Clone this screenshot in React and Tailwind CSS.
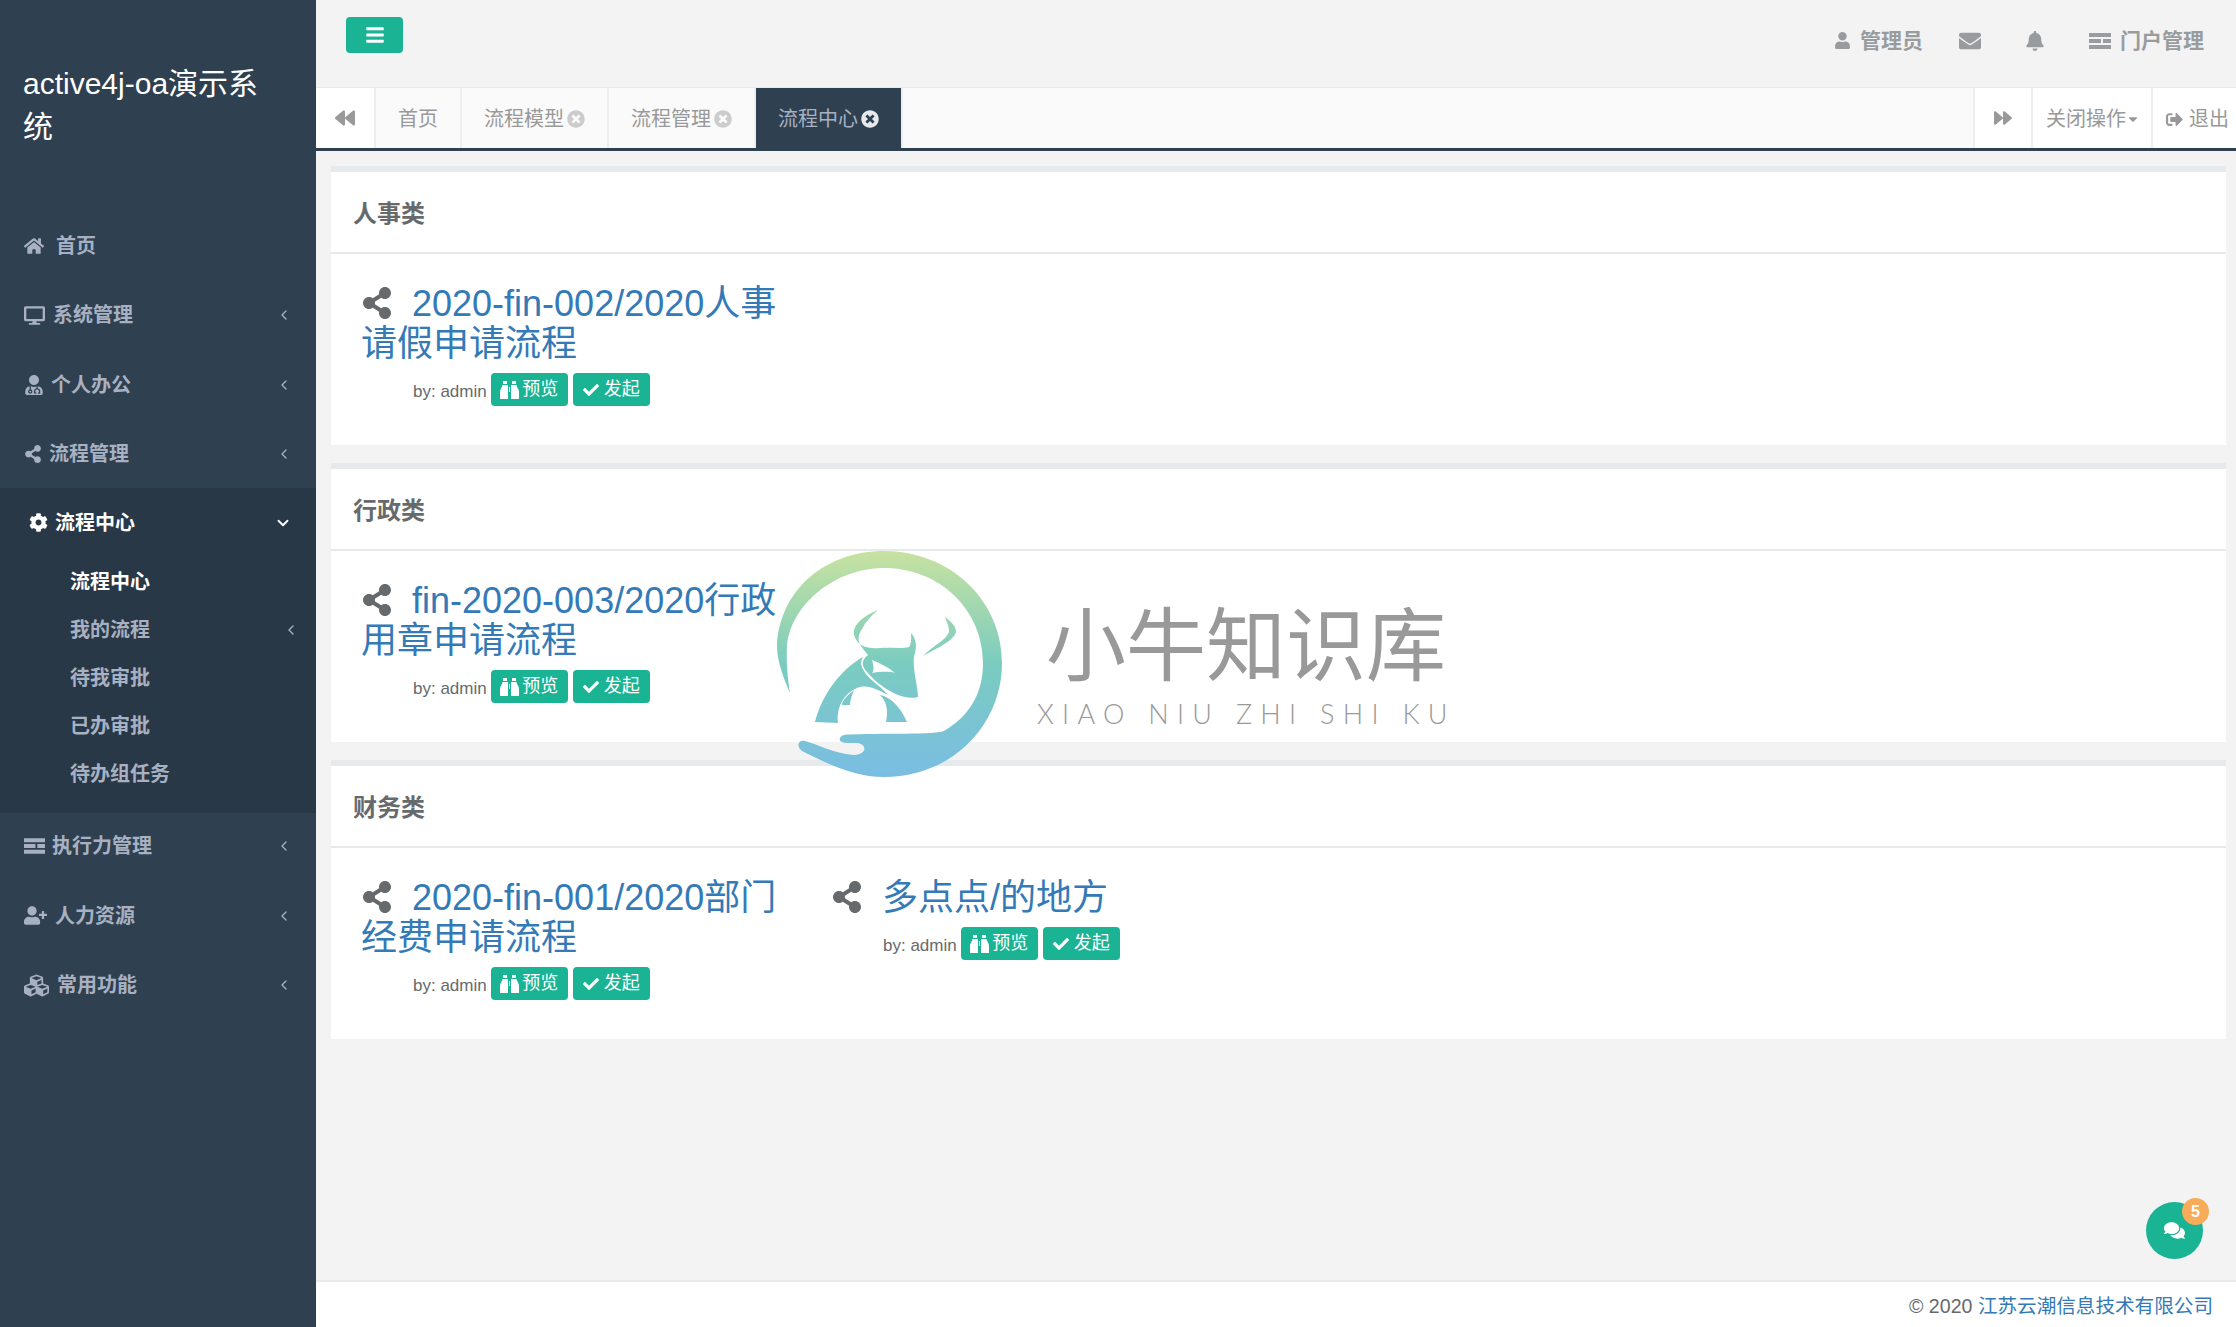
import React from 'react';
import {
  FaHome, FaDesktop, FaUserMd, FaShareAlt, FaCog, FaUserPlus, FaCubes, FaUser, FaEnvelope, FaBell,
  FaBackward, FaForward, FaTimesCircle, FaSignOutAlt, FaCheck, FaComments, FaBars,
  FaCaretDown,
} from 'react-icons/fa';
import { ChevronLeft, ChevronDown } from 'lucide-react';

const TasksIcon = ({ className }) => (
  <svg viewBox="0 0 22 16" className={className} fill="currentColor">
    <path d="M0 0h22v4H0zM0 6h12v4H0zM14 6h8v4h-8zM0 12h22v4H0zM17 1h3v1.5h-3zM17 13h3v1.5h-3z" />
  </svg>
);

const BinocularsIcon = () => (
  <svg viewBox="0 0 19 18" className="w-[19px] h-[18px]" fill="currentColor">
    <path d="M3 0h4v3H3zM12 0h4v3h-4zM2.5 4H8v13.5a.5.5 0 0 1-.5.5H.5a.5.5 0 0 1-.5-.5V11C0 8 2 7 2.5 4zM11 4h5.5C17 7 19 8 19 11v6.500a.5.5 0 0 1-.5.5h-7a.5.5 0 0 1-.5-.5zM9 6h1v5H9z" />
  </svg>
);

// 왼쪽 메뉴
const topItems = [
  { label: '首页', icon: <FaHome size={20} />, gap: 'mr-[12px]' },
  { label: '系统管理', icon: <FaDesktop size={21} />, gap: 'mr-[8px]', arrow: true },
  { label: '个人办公', icon: <FaUserMd size={20} />, gap: 'mr-[7px]', arrow: true },
  { label: '流程管理', icon: <FaShareAlt size={18} />, gap: 'mr-[7px]', arrow: true },
];
const bottomItems = [
  { label: '执行力管理', icon: <TasksIcon className="w-[21px] h-[16px]" />, gap: 'mr-[7px]', arrow: true },
  { label: '人力资源', icon: <FaUserPlus size={23} />, gap: 'mr-[8px]', arrow: true },
  { label: '常用功能', icon: <FaCubes size={25} />, gap: 'mr-[8px]', arrow: true },
];
const subItems = ['流程中心', '我的流程', '待我审批', '已办审批', '待办组任务'];

const MenuRow = ({ item, nudge }) => (
  <li className={`h-[69.5px] pl-6 pr-[24px] flex items-center text-[#a7b1c2] text-[20px] font-bold ${nudge}`}>
    <span className={item.gap}>{item.icon}</span>
    <span className="flex-1">{item.label}</span>
    {item.arrow && <ChevronLeft size={16} strokeWidth={2} />}
  </li>
);

const Sidebar = () => (
  <aside className="w-[316px] shrink-0 bg-[#2f4050]">
    <div className="pt-[62px] pl-[23px] pr-[30px] h-[210px] text-white text-[30px] leading-[43px]">active4j-oa演示系统</div>
    <ul>
      {topItems.map((item) => <MenuRow key={item.label} item={item} nudge="pt-[2px]" />)}
      <li className="bg-[#293846] pb-[15px]">
        <div className="h-[69.5px] pl-[29px] pr-[24px] flex items-center text-white text-[20px] font-bold">
          <FaCog size={19} className="mr-[7px]" />
          <span className="flex-1">流程中心</span>
          <ChevronDown size={18} strokeWidth={2.5} />
        </div>
        {subItems.map((label, i) => (
          <div key={label} className={`h-[48px] pl-[70px] pr-[17px] flex items-center text-[20px] font-bold ${i === 0 ? 'text-white' : 'text-[#a7b1c2]'}`}>
            <span className="flex-1">{label}</span>
            {i === 1 && <ChevronLeft size={16} strokeWidth={2} />}
          </div>
        ))}
      </li>
      {bottomItems.map((item) => <MenuRow key={item.label} item={item} nudge="pb-[2px]" />)}
    </ul>
  </aside>
);

const TopBar = () => (
  <div className="h-[87px] flex justify-between text-[#999c9e] text-[21px] font-bold">
    <button className="ml-[30px] mt-[17px] w-[57px] h-[36px] rounded-[4px] bg-[#1ab394] text-white flex items-center justify-center">
      <FaBars size={20} />
    </button>
    <div className="flex items-center h-[81px] pr-[32px]">
      <FaUser size={17} className="mr-[9px]" />
      <span>管理员</span>
      <FaEnvelope size={22} className="ml-[36px]" />
      <FaBell size={20} className="ml-[44px]" />
      <TasksIcon className="w-[22px] h-[16px] ml-[44px] mr-[9px]" />
      <span>门户管理</span>
    </div>
  </div>
);

const Tab = ({ label, closable, active }) => (
  <div className={`h-full pt-[2px] px-[22px] flex items-center text-[20px] border-r-2 border-[#eeeeee] ${active ? 'bg-[#2f4050] text-[#a7b1c2] border-r-0' : 'text-[#999999]'}`}>
    {label}
    {closable && <FaTimesCircle size={18} className={`ml-[3px] ${active ? 'text-[#e7eaec]' : 'text-[#cccccc]'}`} />}
  </div>
);

const TabBar = () => (
  <div className="h-[64px] bg-[#fafafa] border-t border-[#e7eaec] border-b-[3px] border-b-[#2f4050] flex text-[#999999]">
    <div className="w-[60px] bg-white border-r-2 border-[#eeeeee] flex items-center justify-center">
      <FaBackward size={20} />
    </div>
    <Tab label="首页" />
    <Tab label="流程模型" closable />
    <Tab label="流程管理" closable />
    <Tab label="流程中心" closable active />
    <div className="flex-1" />
    <div className="w-[60px] bg-white border-x-2 border-[#eeeeee] flex items-center justify-center">
      <FaForward size={18} />
    </div>
    <div className="w-[120px] bg-white border-r-2 border-[#eeeeee] pt-[2px] pl-[13px] flex items-center text-[20px]">
      关闭操作<FaCaretDown size={14} />
    </div>
    <div className="w-[83px] bg-white pt-[2px] pl-[13px] flex items-center text-[20px] whitespace-nowrap">
      <FaSignOutAlt size={17} className="mr-[6px]" />退出
    </div>
  </div>
);

const Flow = ({ title }) => (
  <div className="w-[470px] pl-[30px] pr-[15px]">
    <a className="block text-[36px] leading-[40px] text-[#337ab7]">
      <FaShareAlt size={32} className="inline-block align-[-3px] mr-[19px] text-[#676a6c]" />
      {title}
    </a>
    <div className="mt-[9px] ml-[52px] flex items-center gap-[5px] text-[18px] text-[#676a6c]">
      <span className="-mr-[1px] pt-[5px] text-[17px]">by: admin</span>
      <button className="w-[77px] h-[33px] rounded-[4px] bg-[#1ab394] text-white flex items-center justify-center gap-[3px]">
        <BinocularsIcon />预览
      </button>
      <button className="w-[77px] h-[33px] rounded-[4px] bg-[#1ab394] text-white flex items-center justify-center gap-[5px]">
        <FaCheck size={16} />发起
      </button>
    </div>
  </div>
);

const Panel = ({ title, flows }) => (
  <section className="bg-white border-t-[6px] border-[#e7eaec]">
    <h3 className="h-[82px] pl-[22px] pt-[3px] flex items-center text-[24px] font-bold text-[#676a6c] border-b-2 border-[#e7eaec]">{title}</h3>
    <div className="pt-[30px] pb-[39px] flex flex-wrap">
      {flows.map((t) => <Flow key={t} title={t} />)}
    </div>
  </section>
);

// 워터마크 로고
const Watermark = () => (
  <div className="absolute left-[770px] top-[545px] w-[690px] h-[240px] pointer-events-none">
    <svg viewBox="0 0 240 240" className="absolute left-0 top-0 w-[240px] h-[240px]">
      <defs>
        <linearGradient id="wm" gradientUnits="userSpaceOnUse" x1="0" y1="6" x2="0" y2="232">
          <stop offset="0" stopColor="#c8e2a0" />
          <stop offset="0.5" stopColor="#7accc0" />
          <stop offset="1" stopColor="#7abde3" />
        </linearGradient>
      </defs>
      <g fill="url(#wm)">
        <path d="M20 148C10 125 7 112 7 100C10 45 55 6 114 6C180 6 232 55 232 118C232 180 182 232 114 232C85 232 60 220 32 206C26 202 28 194 35 196C50 200 62 208 84 210C96 210 98 200 88 198C76 198 68 198 70 193C72 188 80 190 95 189C130 188 160 190 174 186C198 172 213 150 213 118C213 65 170 23 114 23C65 23 20 60 17 102C16 118 18 135 20 148Z" />
        <path fillRule="evenodd" d="M108 65C90 72 82 82 84 90C88 102 98 104 110 103C118 102 132 104 139 102C142 98 141 92 141 88C146 93 147 100 145 108C141 120 148 140 148 152C140 154 134 152 128 150C118 146 104 136 98 128C92 122 90 116 98 110C92 102 84 96 92 84C96 76 102 70 108 65ZM102 115C104 122 104 126 102 128C108 127 118 126 125 128C118 122 110 118 102 115Z" />
        <path d="M175 72C180 76 186 80 186 87C184 96 165 104 153 111C164 100 178 94 179 86C179 80 176 76 175 72Z" />
        <path d="M93 112C70 125 52 150 45 177L68 178C66 160 76 146 90 142C100 140 110 146 118 150C112 142 98 134 94 126C90 120 91 116 93 112Z" />
        <path d="M84 145C78 150 72 155 72 160L80 160C80 155 82 150 84 145Z" />
        <path d="M110 150C122 152 132 165 137 177L116 177C118 168 118 158 110 150Z" />
      </g>
    </svg>
    <div className="absolute left-[276px] top-[49px] text-[80px] leading-[90px] text-[#999999] font-['Noto_Sans_CJK_SC',sans-serif] whitespace-nowrap">小牛知识库</div>
    <div className="absolute left-[267px] top-[154px] text-[27px] leading-[30px] tracking-[8.3px] text-[#999999] font-['Lato',sans-serif] font-light whitespace-nowrap">XIAO NIU ZHI SHI KU</div>
  </div>
);

const App = () => (
  <div className="relative w-[2236px] h-[1327px] flex overflow-hidden bg-[#f3f3f4] font-['Liberation_Sans','Noto_Sans_CJK_SC',sans-serif]">
    <Sidebar />
    <main className="flex-1 flex flex-col min-w-0">
      <TopBar />
      <TabBar />
      <div className="flex-1 pt-[15px] pl-[15px] pr-[10px] flex flex-col gap-[18px]">
        <Panel title="人事类" flows={['2020-fin-002/2020人事请假申请流程']} />
        <Panel title="行政类" flows={['fin-2020-003/2020行政用章申请流程']} />
        <Panel title="财务类" flows={['2020-fin-001/2020部门经费申请流程', '多点点/的地方']} />
      </div>
      <footer className="h-[47px] bg-white border-t-2 border-[#e7eaec] flex items-center justify-end pr-[23px] pt-[4px] text-[19.6px] text-[#676a6c]">
        © 2020&nbsp;<a className="text-[#337ab7]">江苏云潮信息技术有限公司</a>
      </footer>
    </main>
    <Watermark />
    <div className="absolute left-[2146px] top-[1202px] w-[57px] h-[57px] rounded-full bg-[#1ab394] text-white flex items-center justify-center">
      <FaComments size={21} />
      <span className="absolute -top-[4px] -right-[6px] w-[27px] h-[27px] rounded-full bg-[#f8ac59] flex items-center justify-center text-[16px] font-bold">5</span>
    </div>
  </div>
);

export default App;
